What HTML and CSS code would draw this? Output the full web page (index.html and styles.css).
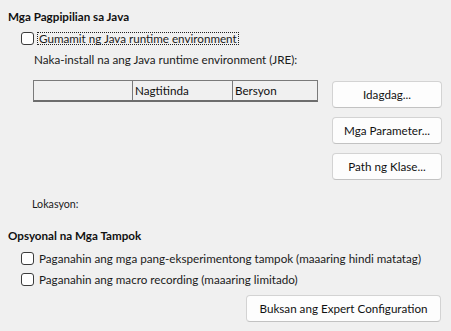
FILE: index.html
```html
<!DOCTYPE html>
<html lang="tl">
<head>
<meta charset="utf-8">
<link rel="stylesheet" href="styles.css">
</head>
<body>
<div class="page">
  <div class="heading">Mga Pagpipilian sa Java</div>
  <div class="check-row first">
    <span class="box"></span>
    <span class="label focus">Gumamit ng Java runtime environment</span>
  </div>
  <div class="note">Naka-install na ang Java runtime environment (JRE):</div>
  <div class="jre">
    <div class="table">
      <div class="th c1"></div>
      <div class="th c2">Nagtitinda</div>
      <div class="th c3">Bersyon</div>
    </div>
    <div class="buttons">
      <div class="btn">Idagdag...</div>
      <div class="btn">Mga Parameter...</div>
      <div class="btn">Path ng Klase...</div>
    </div>
  </div>
  <div class="location">Lokasyon:</div>
  <div class="heading h2">Opsyonal na Mga Tampok</div>
  <div class="check-row opt">
    <span class="box"></span>
    <span class="label">Paganahin ang mga pang-eksperimentong tampok (maaaring hindi matatag)</span>
  </div>
  <div class="check-row opt">
    <span class="box"></span>
    <span class="label">Paganahin ang macro recording (maaaring limitado)</span>
  </div>
  <div class="footer">
    <div class="btn wide">Buksan ang Expert Configuration</div>
  </div>
</div>
</body>
</html>
```
FILE: styles.css
```css
html, body {
  margin: 0;
  padding: 0;
  background: #f0f0f0;
}
body {
  font-family: Lato, "Noto Sans", sans-serif;
  font-size: 11.65px;
  color: #1a1a1a;
  width: 451px;
  height: 331px;
  overflow: hidden;
}
.page {
  padding: 9px 10px 0 8px;
}
.heading {
  font-weight: bold;
  line-height: 16px;
  height: 16px;
  color: #111;
}
.check-row {
  display: flex;
  align-items: center;
  padding-left: 13px;
}
.check-row.first {
  margin-top: 7px;
  height: 13px;
}
.box {
  width: 11px;
  height: 11px;
  border: 1px solid #3c3c3c;
  border-radius: 3px;
  background: #fff;
  flex: none;
}
.label {
  margin-left: 3px;
  white-space: nowrap;
  line-height: 11px;
  padding: 0 1px;
  border: 1px dotted transparent;
}
.label.focus {
  border-color: #222;
}
.note {
  margin-top: 7px;
  padding-left: 26px;
  line-height: 16px;
  height: 16px;
  white-space: nowrap;
}
.jre {
  display: flex;
  margin-top: 12px;
  padding-left: 25px;
}
.table {
  display: grid;
  grid-template-columns: 98px 100px 85px;
  height: 19px;
  width: 283px;
  border: 1px solid #7a7a7a;
  border-bottom: 2px solid #6d6d6d;
  align-self: flex-start;
}
.th {
  line-height: 19px;
  padding-left: 2px;
  white-space: nowrap;
  color: #111;
}
.c2 {
  border-left: 1px solid #7a7a7a;
}
.c3 {
  border-left: 1px solid #7a7a7a;
}
.buttons {
  display: flex;
  flex-direction: column;
  gap: 9px;
  margin-left: 14px;
  margin-top: 1px;
}
.btn {
  width: 108px;
  height: 25px;
  line-height: 25px;
  text-align: center;
  background: #fdfdfd;
  border: 1px solid #d3d3d3;
  border-bottom-color: #c2c2c2;
  border-radius: 4px;
  white-space: nowrap;
  color: #111;
}
.location {
  margin-top: 16px;
  padding-left: 24px;
  font-size: 10.7px;
  line-height: 16px;
  height: 16px;
}
.h2 {
  margin-top: 16px;
}
.check-row.opt {
  height: 21px;
}
.check-row.opt:first-of-type {
  margin-top: 0;
}
.h2 + .check-row {
  margin-top: 4px;
}
.footer {
  display: flex;
  justify-content: flex-end;
  margin-top: 5px;
}
.btn.wide {
  width: 193px;
}
```
